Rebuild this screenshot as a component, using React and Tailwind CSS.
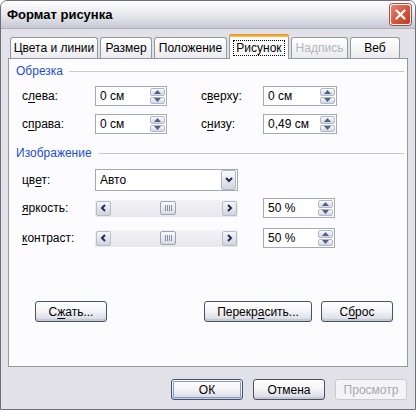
import React from "react";

const U = ({ c }) => <span className="underline underline-offset-[2px]">{c}</span>;

function Spin() {
  return (
    <div className="flex flex-col gap-px w-[15px] h-[16px] mr-[1px]">
      {[0, 1].map((i) => (
        <div key={i} className="flex-1 flex items-center justify-center rounded-[2px] border border-[#b3b8c8] bg-gradient-to-b from-[#fbfbfd] to-[#d4d6e2]">
          <svg width="7" height="4" viewBox="0 0 7 4">
            {i === 0 ? <polygon points="0,4 3.5,0 7,4" fill="#4d6185" /> : <polygon points="0,0 3.5,4 7,0" fill="#4d6185" />}
          </svg>
        </div>
      ))}
    </div>
  );
}

function NumInput({ value, w }) {
  return (
    <div className={`flex items-center h-[20px] border border-[#a4a9b7] bg-white ${w}`}>
      <span className="flex-1 pl-[4px] text-[12px] text-black leading-none">{value}</span>
      <Spin />
    </div>
  );
}

function ArrowBtn({ dir }) {
  return (
    <div className="w-[15px] h-[15px] flex items-center justify-center rounded-[2px] border border-[#b8bcc9] bg-gradient-to-b from-[#f6f6fa] to-[#d2d4de]">
      <svg width="7" height="8" viewBox="0 0 7 8">
        {dir === "l" ? (
          <polyline points="5,1 2,4 5,7" fill="none" stroke="#1f2f4f" strokeWidth="2" />
        ) : (
          <polyline points="2,1 5,4 2,7" fill="none" stroke="#1f2f4f" strokeWidth="2" />
        )}
      </svg>
    </div>
  );
}

function Slider() {
  return (
    <div className="w-[143px] h-[17px] flex items-center px-[1px] bg-gradient-to-b from-[#f3f3f6] to-[#e6e6ec]">
      <ArrowBtn dir="l" />
      <div className="flex-1 flex items-center pl-[49px]">
        <div className="w-[16px] h-[14px] rounded-[2px] border border-[#9ea3b4] bg-gradient-to-b from-[#fafafc] to-[#d8dae4] flex items-center justify-center gap-[1px]">
          {[0, 1, 2, 3].map((i) => (
            <div key={i} className="w-px h-[6px] bg-[#8a90a4]" />
          ))}
        </div>
      </div>
      <ArrowBtn dir="r" />
    </div>
  );
}

function Btn({ children, w, def, disabled }) {
  return (
    <div
      className={`${w} h-[21px] rounded-[3px] border flex items-center justify-center text-[12px] ${
        disabled
          ? "border-[#c9c9d0] text-[#a8a8b0] bg-[#f4f4f6]"
          : "border-[#4c5266] text-black bg-gradient-to-b from-[#ffffff] via-[#f3f3f6] to-[#d6d7e0] shadow-[inset_0_-2px_0_#c6c8d4]"
      } ${def ? "outline outline-1 outline-[#7f9bd8] -outline-offset-[3px]" : ""}`}
    >
      {children}
    </div>
  );
}

function Group({ title }) {
  return (
    <div className="flex items-center h-[14px]">
      <span className="text-[12px] text-[#1e4ecf] leading-none">{title}</span>
      <div className="flex-1 h-px bg-[#c9c9d6] ml-[6px] mr-[3px]" />
    </div>
  );
}

function Tab({ children, w, sel, dis }) {
  if (sel)
    return (
      <div className={`${w} h-[25px] -mb-px relative z-10 border border-[#919b9c] border-b-0 rounded-t-[3px] bg-[#fcfcfe] flex flex-col`}>
        <div className="h-[3px] rounded-t-[2px] bg-gradient-to-b from-[#e68b2c] to-[#ffc73c] -mx-px -mt-px" />
        <div className="flex-1 flex items-center justify-center">
          <span className="text-[12px] text-black px-[2px] outline outline-1 outline-dotted outline-black leading-[14px]">{children}</span>
        </div>
      </div>
    );
  return (
    <div className={`${w} h-[21px] border border-[#919b9c] border-b-0 rounded-t-[3px] bg-gradient-to-b from-[#ffffff] to-[#ebebf0] flex items-center justify-center text-[12px] ${dis ? "text-[#b6b6bc]" : "text-black"}`}>
      {children}
    </div>
  );
}

export default function App() {
  return (
    <div
      className="w-[416px] h-[410px] flex flex-col bg-[#e2e1e7] border border-[#6e6e7a] rounded-t-[7px] overflow-hidden"
      style={{ fontFamily: '"Liberation Sans", Arial, sans-serif' }}
    >
      <div className="h-[28px] shrink-0 flex items-center justify-between pl-[6px] pr-[4px] bg-gradient-to-b from-[#ffffff] via-[#e8e8ee] to-[#c8c8d4] border-b border-[#b0b0bc]">
        <span className="text-[13px] font-bold text-black">Формат рисунка</span>
        <div className="w-[21px] h-[21px] rounded-[3px] border border-white bg-gradient-to-br from-[#e8826c] via-[#d45a3f] to-[#b83a22] flex items-center justify-center shadow-[0_0_0_1px_#b04a3a]">
          <svg width="11" height="11" viewBox="0 0 11 11">
            <path d="M1.5 1.5 L9.5 9.5 M9.5 1.5 L1.5 9.5" stroke="white" strokeWidth="2.2" strokeLinecap="round" />
          </svg>
        </div>
      </div>

      <div className="flex-1 flex flex-col px-[7px] pb-[8px]">
        <div className="mt-[4px] h-[25px] flex items-end gap-[2px] pl-[2px]">
          <Tab w="w-[88px]">Цвета и линии</Tab>
          <Tab w="w-[52px]">Размер</Tab>
          <Tab w="w-[73px]">Положение</Tab>
          <Tab w="w-[60px]" sel>Рисунок</Tab>
          <Tab w="w-[57px]" dis>Надпись</Tab>
          <Tab w="w-[50px]">Веб</Tab>
        </div>

        <div className="h-[309px] border border-[#919b9c] bg-[#fcfcfe] flex flex-col pl-[7px] pt-[5px]">
          <Group title="Обрезка" />
          <div className="flex flex-col gap-[8px] mt-[8px] pl-[6px]">
            <div className="flex items-center text-[12px] text-black">
              <span className="w-[73px]">с<U c="л" />ева:</span>
              <NumInput value="0 см" w="w-[72px]" />
              <span className="w-[62px] ml-[34px]">с<U c="в" />ерху:</span>
              <NumInput value="0 см" w="w-[74px]" />
            </div>
            <div className="flex items-center text-[12px] text-black">
              <span className="w-[73px]">с<U c="п" />рава:</span>
              <NumInput value="0 см" w="w-[72px]" />
              <span className="w-[62px] ml-[34px]">с<U c="н" />изу:</span>
              <NumInput value="0,49 см" w="w-[74px]" />
            </div>
          </div>

          <div className="mt-[12px]">
            <Group title="Изображение" />
          </div>

          <div className="flex flex-col pl-[6px] mt-[9px] text-[12px] text-black">
            <div className="flex items-center h-[22px]">
              <span className="w-[73px]">цв<U c="е" />т:</span>
              <div className="w-[143px] h-[22px] border border-[#a4a9b7] bg-white flex items-center">
                <span className="flex-1 pl-[4px]">Авто</span>
                <div className="w-[15px] h-[20px] mr-px rounded-[2px] border border-[#b3b8c8] bg-gradient-to-b from-[#fbfbfd] to-[#d2d4e0] flex items-center justify-center">
                  <svg width="8" height="6" viewBox="0 0 8 6">
                    <polyline points="1,1 4,4 7,1" fill="none" stroke="#1f2f4f" strokeWidth="2" />
                  </svg>
                </div>
              </div>
            </div>
            <div className="flex items-center h-[20px] mt-[7px]">
              <span className="w-[73px]"><U c="я" />ркость:</span>
              <Slider />
              <div className="ml-[25px]">
                <NumInput value="50 %" w="w-[72px]" />
              </div>
            </div>
            <div className="flex items-center h-[20px] mt-[10px]">
              <span className="w-[73px]"><U c="к" />онтраст:</span>
              <Slider />
              <div className="ml-[25px]">
                <NumInput value="50 %" w="w-[72px]" />
              </div>
            </div>
          </div>

          <div className="flex items-center mt-[53px] pl-[19px] pr-[14px]">
            <Btn w="w-[72px]">С<U c="ж" />ать...</Btn>
            <div className="flex-1" />
            <Btn w="w-[108px]">Перекр<U c="а" />сить...</Btn>
            <div className="w-[9px]" />
            <Btn w="w-[72px]">С<U c="б" />рос</Btn>
          </div>
        </div>

        <div className="flex justify-end gap-[10px] mt-[12px] pr-[1px]">
          <Btn w="w-[72px]" def>ОК</Btn>
          <Btn w="w-[72px]">Отмена</Btn>
          <Btn w="w-[72px]" disabled>Просмотр</Btn>
        </div>
      </div>
    </div>
  );
}
